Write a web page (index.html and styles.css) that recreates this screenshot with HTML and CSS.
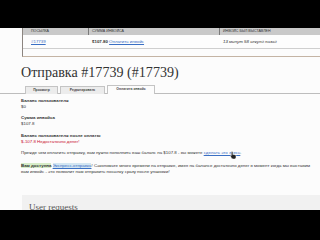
FILE: index.html
```html
<!DOCTYPE html>
<html lang="ru">
<head>
<meta charset="utf-8">
<link rel="stylesheet" href="styles.css">
</head>
<body>
<div class="page">
  <div class="topbar"></div>
  <div class="invoice-box">
    <div class="row head">
      <div class="c1">Посылка</div>
      <div class="c2">Сумма инвойса</div>
      <div class="c3">Инвойс был выставлен</div>
    </div>
    <div class="row data">
      <div class="c1"><a href="#">#17739</a></div>
      <div class="c2"><b>$107.80</b> <a href="#">Оплатить инвойс</a></div>
      <div class="c3"><i>13 минут 58 секунд назад</i></div>
    </div>
  </div>
  <h1 class="title">Отправка #17739 (#17739)</h1>
  <div class="tabs">
    <span class="tab">Просмотр</span>
    <span class="tab">Редактировать</span>
    <span class="tab active">Оплатить инвойс</span>
  </div>
  <div class="content">
    <div class="group"><b>Баланс пользователя</b><br>$0</div>
    <div class="group"><b>Сумма инвойса</b><br>$107.8</div>
    <div class="group"><b>Баланс пользователя после оплаты</b><br><span class="red">$-107.8 Недостаточно денег!</span></div>
    <p class="para">Прежде чем оплатить отправку, вам нужно пополнить ваш баланс на $107.8 - вы можете <a href="#" class="here">сделать это здесь<svg class="cursor" width="7" height="8" viewBox="0 0 7 8"><path d="M2 0.5c.6 0 .9.4.9 1v2.2c.2-.3.9-.3 1.1.1.3-.3.9-.2 1 .2.4-.2 1 0 1 .6v1.6c0 1-.8 1.8-1.9 1.8h-1c-.8 0-1.3-.4-1.7-1L.4 5.1c-.3-.5.3-1 .8-.6l.1.1V1.5c0-.6.3-1 .7-1z" fill="#222" stroke="#fff" stroke-width=".5"/></svg></a>.</p>
    <p class="para"><b class="hl-green">Вам доступна</b> <a href="#" class="hl-blue">Экспресс-отправка</a>! Сэкономьте много времени на отправке, имея на балансе достаточно денег в момент когда мы выставим<br>вам инвойс - это позволит нам отправить посылку сразу после упаковки!</p>
  </div>
  <div class="spacer"></div>
  <div class="panel"><span>User requests</span></div>
  <div class="bottombar"></div>
</div>
</body>
</html>
```
FILE: styles.css
```css
html, body {
  margin: 0;
  padding: 0;
  background: #fcfcfc;
  overflow: hidden;
}
.page {
  width: 360px;
  height: 240px;
  display: flex;
  flex-direction: column;
  font-family: "Liberation Sans", Arial, sans-serif;
  color: #333;
}
.topbar {
  height: 28px;
  background: #000;
  flex: none;
}
.invoice-box {
  margin-left: 22px;
  border-left: 1px solid #8c8580;
  border-bottom: 1px solid #c4b4a4;
  padding-bottom: 7px;
  flex: none;
}
.row {
  display: flex;
}
.row.head {
  height: 7px;
  background: #c9c9c9;
  font-size: 3.6px;
  line-height: 7px;
  text-transform: uppercase;
  color: #333;
}
.row.data {
  height: 13px;
  line-height: 13px;
  font-size: 4.4px;
  border-bottom: 1px solid #cfcfcf;
  background: #fdfdfd;
}
.c1 { width: 57px; padding-left: 8px; }
.c2 { width: 127px; padding-left: 3px; }
.c3 { flex: 1; padding-left: 3px; }
.row.head .c2, .row.head .c3 { border-left: 1px solid #7a7a7a; }
.row.data .c2 { border-left: 1px solid transparent; }
.row.data .c3 { border-left: 1px solid transparent; }
a { color: #3a6fc4; text-decoration: underline; }
.title {
  margin: 7px 0 2px 21px;
  font-family: "Liberation Serif", "Times New Roman", serif;
  font-weight: normal;
  font-size: 14.1px;
  line-height: 17px;
  color: #333;
  flex: none;
}
.tabs {
  height: 10px;
  border-bottom: 1px solid #bdbdbd;
  display: flex;
  gap: 2px;
  padding-left: 25px;
  align-items: flex-end;
  flex: none;
}
.tab {
  height: 8px;
  box-sizing: border-box;
  border: 1px solid #c4c4c4;
  border-bottom: none;
  background: #ececec;
  font-size: 3.4px;
  font-weight: bold;
  line-height: 7px;
  padding: 0 4px;
  color: #444;
  position: relative;
  top: 1px;
}
.tab:nth-child(1) { width: 33px; text-align: center; }
.tab:nth-child(2) { width: 45px; text-align: center; }
.tab.active { width: 48px; background: #fcfcfc; height: 9px; text-align: center; }
.content {
  margin: 4px 0 0 21px;
  font-size: 4.4px;
  line-height: 6px;
  flex: none;
}
.group { margin-bottom: 5px; }
.group:nth-child(2) { margin-bottom: 6px; }
.red { color: #c8102e; }
.para { margin: 0 0 7px 0; white-space: nowrap; }
.para:first-of-type { margin-top: 5px; }
.here { position: relative; }
.cursor {
  position: absolute;
  left: 26px;
  top: 1px;
}
.hl-green { background: #d6ecc8; }
.hl-blue { background: #d3e6f2; }
.spacer { flex: 1; }
.panel {
  margin-left: 22px;
  height: 15px;
  box-sizing: border-box;
  padding: 7.5px 0 0 7px;
  background: #f1f1f1;
  overflow: hidden;
  font-family: "Liberation Serif", "Times New Roman", serif;
  font-size: 9px;
  line-height: 9px;
  color: #555;
  flex: none;
}
.bottombar {
  height: 30px;
  background: #000;
  flex: none;
}
```
